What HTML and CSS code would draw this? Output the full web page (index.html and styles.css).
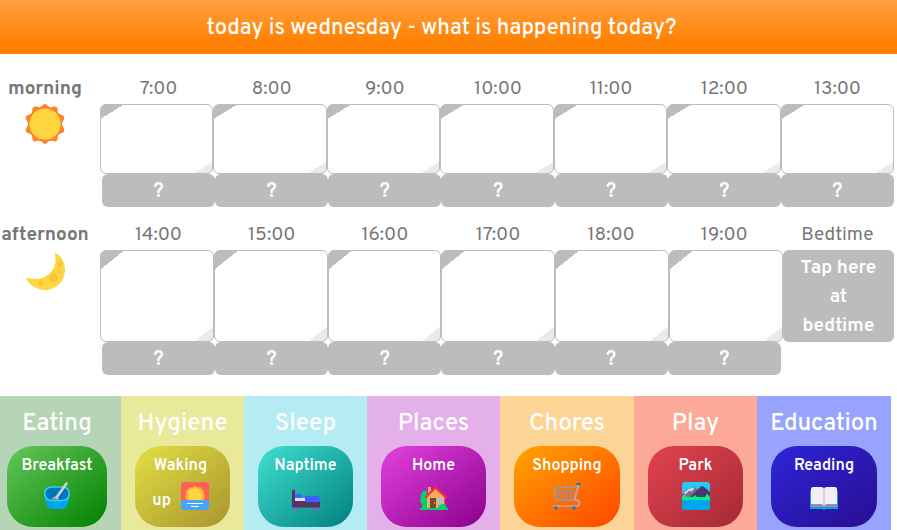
FILE: index.html
```html
<!DOCTYPE html>
<html lang="en">
<head>
<meta charset="utf-8">
<meta name="viewport" content="width=device-width, initial-scale=1">
<title>Today</title>
<link rel="stylesheet" href="styles.css">
</head>
<body>
<header class="banner"><h1>today is wednesday - what is happening today?</h1></header>
<main>
  <section class="period morning">
    <div class="period-label">
      <h2>morning</h2>
      <svg class="period-icon" viewBox="0 0 40 40" aria-hidden="true">
        <path fill="#ff822d" d="M20 0C22 0 23 3 25.500 3.200C27.500 3.500 30 1.500 31.800 3.200C33.500 5 32 7.500 33.500 9.200C35 11 38.500 10.500 39.200 13C39.800 15.500 37 17.500 37 20C37 22.500 39.800 24.500 39.200 27C38.500 29.500 35 29 33.500 30.800C32 32.500 33.500 35 31.800 36.800C30 38.500 27.500 36.500 25.500 36.800C23 37 22 40 20 40C18 40 17 37 14.500 36.800C12.500 36.500 10 38.500 8.200 36.800C6.500 35 8 32.500 6.500 30.800C5 29 1.500 29.500.8 27C.2 24.500 3 22.500 3 20C3 17.500.2 15.500.8 13C1.500 10.500 5 11 6.500 9.200C8 7.500 6.500 5 8.200 3.200C10 1.500 12.500 3.500 14.500 3.200C17 3 18 0 20 0Z"/>
        <circle cx="20" cy="20" r="15.600" fill="#fcd53f"/>
      </svg>
    </div>
    <div class="hours">
      <div class="row times"><span>7:00</span><span>8:00</span><span>9:00</span><span>10:00</span><span>11:00</span><span>12:00</span><span>13:00</span></div>
      <div class="slots"><div class="slot"></div><div class="slot"></div><div class="slot"></div><div class="slot"></div><div class="slot"></div><div class="slot"></div><div class="slot"></div></div>
      <div class="row"><button class="ask">?</button><button class="ask">?</button><button class="ask">?</button><button class="ask">?</button><button class="ask">?</button><button class="ask">?</button><button class="ask">?</button></div>
    </div>
  </section>
  <section class="period afternoon">
    <div class="period-label">
      <h2>afternoon</h2>
      <svg class="period-icon" viewBox="0 0 40 40" aria-hidden="true">
        <path fill="#ffd640" d="M31 1C37 5 40 11 40 18C40 29 31 38 20 38C12 38 4 33 1 26.500C1.200 25.800 1.800 25.800 2.500 26C16 30 31 22 30.500 7C30.500 5 30 3 30 1.500C30 .8 30.500.8 31 1Z"/>
        <g fill="#f9c23c"><circle cx="28.500" cy="26" r="4.400"/><circle cx="35" cy="12" r="2.600"/><circle cx="16" cy="31" r="2.500"/><circle cx="35.800" cy="20" r="1.500"/></g>
      </svg>
    </div>
    <div class="hours">
      <div class="row times"><span>14:00</span><span>15:00</span><span>16:00</span><span>17:00</span><span>18:00</span><span>19:00</span><span>Bedtime</span></div>
      <div class="slots"><div class="slot"></div><div class="slot"></div><div class="slot"></div><div class="slot"></div><div class="slot"></div><div class="slot"></div><button class="bedtime">Tap here at bedtime</button></div>
      <div class="row"><button class="ask">?</button><button class="ask">?</button><button class="ask">?</button><button class="ask">?</button><button class="ask">?</button><button class="ask">?</button></div>
    </div>
  </section>
  <div class="categories">
    <section class="category eating"><h2>Eating</h2>
      <button class="activity">Breakfast<br><svg viewBox="0 0 28 28" aria-hidden="true"><path fill="#00a6ed" d="M1.500 10.500C1.500 22 4 27 10 27H18C24 27 26.500 22 26.500 10.500Z"/><rect x="1.800" y="5" width="24.400" height="13.500" rx="6.500" fill="#0074ba" stroke="#26d8f5" stroke-width="1.500"/><path fill="#9b9b9b" d="M8.500 17.500C9 14.500 12 13.500 14 14.500L17 17.700Z"/><path fill="none" stroke="#d3d3d3" stroke-width="2.600" stroke-linecap="round" d="M23.500 1.500L13.500 15.500"/></svg></button>
    </section>
    <section class="category hygiene"><h2>Hygiene</h2>
      <button class="activity">Waking<br>up&nbsp; <svg viewBox="0 0 28 28" aria-hidden="true"><rect width="28" height="28" rx="3" fill="#ff5f5a"/><path fill="#ffb02e" d="M14 3.800L16.500 5.500L19.500 5L20.800 7.500L23.300 9L22.800 12L24 14.500L22.500 18H5.500L4 14.500L5.200 12L4.700 9L7.200 7.500L8.500 5L11.500 5.500Z"/><circle cx="14" cy="13.500" r="7.300" fill="#fcd53f"/><path fill="#46a4fb" d="M0 18H28V25A3 3 0 0 1 25 28H3A3 3 0 0 1 0 25Z"/><path fill="none" stroke="#fff" stroke-linecap="round" d="M6.500 21.500H21.500M10.500 24.500H17.500"/></svg></button>
    </section>
    <section class="category sleep"><h2>Sleep</h2>
      <button class="activity">Naptime<br><svg viewBox="0 0 28 28" aria-hidden="true"><path fill="#9c57c9" d="M2 25H6V27A2 2 0 0 1 2 27ZM22 25H26V27A2 2 0 0 1 22 27Z"/><path fill="#3f5fff" d="M3 12H7C9.500 12 10.500 13.500 11 15.500H3Z"/><path fill="#e1d8ec" d="M3 16H13V19H3Z"/><path fill="#533566" d="M0 9A1.500 1.500 0 0 1 3 9V19H28V24A1.500 1.500 0 0 1 26.500 25.500H1.500A1.500 1.500 0 0 1 0 24Z"/><path fill="#3f5fff" d="M13 14H25A2.500 2.500 0 0 1 27.500 16.500V20H13Z"/></svg></button>
    </section>
    <section class="category places"><h2>Places</h2>
      <button class="activity">Home<br><svg viewBox="0 0 28 28" aria-hidden="true"><path fill="#00d26a" d="M0 28V26H2V22A4 4 0 0 1 1 16C0 11 3 8 7 9V26H28V28Z"/><path fill="#f3ad61" d="M8 5H11V13H8ZM7 15L15.500 6.500L24.500 15V26H7Z"/><path fill="none" stroke="#f92f35" stroke-width="2" stroke-linecap="round" stroke-linejoin="round" d="M6 15L15.500 5.500L26 15.500"/><path fill="#7d4533" d="M10 16H16V26H10Z"/><path fill="#83cbff" d="M18 16H22V21H18Z"/><circle cx="14.500" cy="21" r=".7" fill="#f9c23c"/><path fill="#00d26a" d="M18 26C17.500 23.500 20 22 21.500 22.500C24 21 27 23.500 26.500 26Z"/></svg></button>
    </section>
    <section class="category chores"><h2>Chores</h2>
      <button class="activity">Shopping<br><svg viewBox="0 0 28 28" aria-hidden="true"><path fill="none" stroke="#998ea4" stroke-width="1" d="M5.500 6V18M9.500 6V18M13.500 6V18M17.500 5V18M2 10H22M2 14H21"/><path fill="none" stroke="#9b9b9b" stroke-width="1.700" stroke-linejoin="round" d="M24 4.500L1.500 6L3 18L20.500 18.500"/><path fill="none" stroke="#b4acbc" stroke-width="1.700" stroke-linecap="round" stroke-linejoin="round" d="M25.500 2L21.500 18C27 17.500 28 24 24 24H1"/><path fill="none" stroke="#0084ce" stroke-width="1.800" stroke-linecap="round" d="M24 2H27"/><circle cx="3" cy="26" r="1.700" fill="#0084ce"/><circle cx="21" cy="26" r="1.700" fill="#0084ce"/></svg></button>
    </section>
    <section class="category play"><h2>Play</h2>
      <button class="activity">Park<br><svg viewBox="0 0 28 28" aria-hidden="true"><rect width="28" height="28" rx="3" fill="#26c9fc"/><path fill="#7a6b91" d="M0 11L5 7L13 5L19 11V18H0Z"/><path fill="#d8d2df" d="M0 12L7 6.500L13 5.500L10 9.500L7 9L4 12L2 11Z"/><path fill="#433b6b" d="M9 14L19 4.500Q20 3.500 21.500 4.500L28 10V18H9Z"/><path fill="#00f08a" d="M0 15L3 12L5 15H11L13 13L15 15H23L25 11.500L28 15V19H0Z"/><path fill="#00a6ed" d="M0 18H28V25A3 3 0 0 1 25 28H3A3 3 0 0 1 0 25Z"/></svg></button>
    </section>
    <section class="category education"><h2>Education</h2>
      <button class="activity">Reading<br><svg viewBox="0 0 28 28" aria-hidden="true"><path fill="#00a6ed" d="M0 10A2 2 0 0 1 2 8H26A2 2 0 0 1 28 10V27H16L14 28L12 27H0Z"/><path fill="#998ea4" d="M1 6H27V25H16Q15 25 14 26Q13 25 12 25H1Z"/><path fill="#f3eef8" d="M1 7A2 2 0 0 1 3 5H11Q14 5 14 7V24Q13 22 11 22H1ZM14 7Q14 5 17 5H25A2 2 0 0 1 27 7V22H17Q15 22 14 24Z"/><path fill="none" stroke="#cdc4d6" stroke-width="1.300" d="M14 6V24"/></svg></button>
    </section>
  </div>
</main>
</body>
</html>
```
FILE: styles.css
```css
* { box-sizing: border-box; }

body {
  margin: 0;
  background: #fff;
  color: #777;
  font-family: Overpass, Roboto, sans-serif;
  font-size: 19px;
  overflow: hidden;
}

h1, h2 { margin: 0; }

button {
  margin: 0;
  border: 0;
  color: #fff;
  font: inherit;
  font-weight: 600;
  cursor: pointer;
}

.banner {
  padding: 14px 14px 10px 0;
  background: linear-gradient(#ffa03e, #ff8103 80%);
  color: #fff;
  text-align: center;
}

.banner h1 {
  font-size: 22px;
  font-weight: 500;
  line-height: 30px;
}

.period {
  display: grid;
  grid-template-columns: 90px 1fr;
  gap: 10px;
  padding-right: 3px;
}

.morning { padding-top: 20px; }
.afternoon { padding-top: 13px; }

.period-label {
  display: flex;
  flex-direction: column;
  align-items: center;
}

.period-label h2 {
  font-size: 19px;
  font-weight: 700;
  line-height: 30px;
}

.period-icon {
  width: 40px;
  height: 40px;
}

.afternoon .period-icon { margin-top: 2px; }

.row {
  display: grid;
  grid-template-columns: repeat(7, 1fr);
  margin-left: 2px;
  text-align: center;
}

.times { line-height: 30px; }

.slots { display: grid; }

.morning .slots {
  grid-template-columns: repeat(7, 1fr);
  grid-auto-rows: 70px;
}

.afternoon .slots {
  grid-template-columns: repeat(6, 1fr) 14%;
  grid-auto-rows: minmax(92px, auto);
}

.slot {
  border: 1px solid #bcbcbc;
  border-radius: 6px;
  background:
    linear-gradient(to bottom right, #bcbcbc 10%, transparent 10%),
    linear-gradient(to bottom right, #fff 92%, #eaeaea 92%);
}

.ask, .bedtime {
  border-radius: 6px;
  background: #bcbcbc;
}

.ask {
  padding: 3px 0 0;
  font-size: 20px;
  line-height: 30px;
}

.bedtime {
  padding: 3px 14px 0;
  line-height: 29px;
}

.categories {
  display: grid;
  grid-template-columns: 121fr 123fr 123fr 133fr 134fr 123fr 134fr;
  margin-top: 21px;
  padding-right: 6px;
}

.category {
  min-width: 0;
  padding: 12px 14px 14px;
  color: #fff;
  text-align: center;
}

.category h2 {
  display: flex;
  justify-content: center;
  font-size: 24px;
  font-weight: 500;
  line-height: 32px;
  margin-bottom: 6px;
}

.activity {
  width: 100%;
  padding: 3px 0 8px;
  border-radius: 26px;
  font-size: 16px;
  line-height: 35px;
}

.activity svg {
  width: 28px;
  height: 28px;
  margin-top: -6px;
  vertical-align: -5px;
}

.hygiene .activity { padding-right: 4px; }
.hygiene svg { margin-left: 2px; }

.eating { padding-left: 7px; background: #b6d5b7; }
.eating .activity { background: linear-gradient(to bottom right, #66c75a, #008000); }
.hygiene { background: #e8e99b; }
.hygiene .activity { background: linear-gradient(to bottom right, #e2df43, #a8952d); }
.sleep { background: #b5ecf4; }
.sleep .activity { background: linear-gradient(to bottom right, #40e0d0, #008080); }
.places { background: #e3b0ea; }
.places .activity { background: linear-gradient(to bottom right, #e342df, #8b008b); }
.chores { background: #fcd596; }
.chores .activity { background: linear-gradient(to bottom right, #ffa500, #ff4500); }
.play { background: #fca998; }
.play .activity { background: linear-gradient(to bottom right, #e2434f, #a52a35); }
.education { background: #97a3fc; }
.education .activity { background: linear-gradient(to bottom right, #2d25d9, #2a0e91); }
```
